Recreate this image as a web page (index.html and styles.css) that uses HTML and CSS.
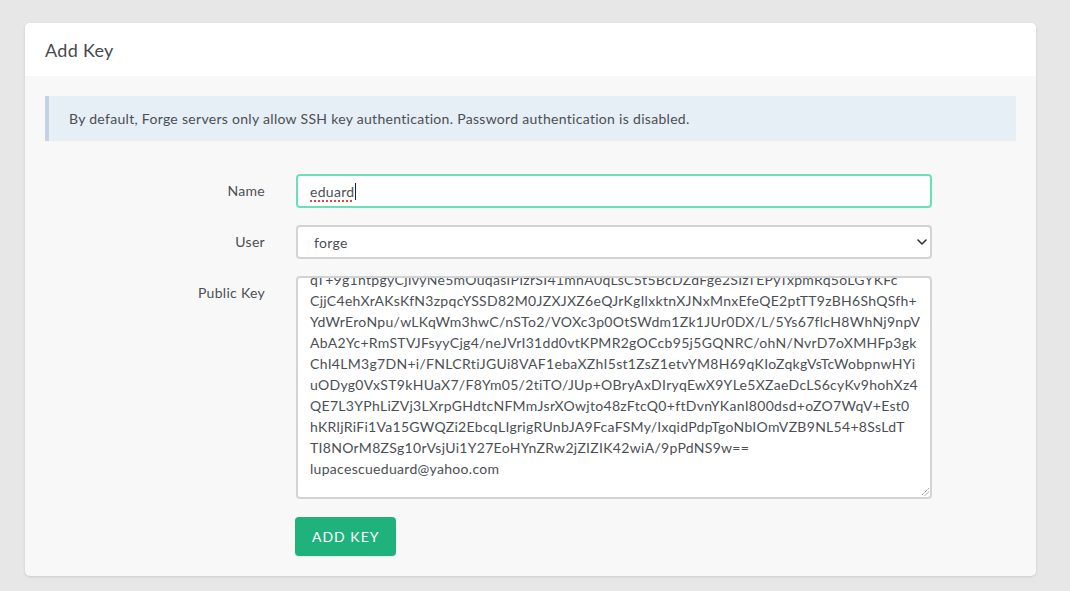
FILE: index.html
```html
<!DOCTYPE html>
<html lang="en">
<head>
<meta charset="utf-8">
<title>Add Key</title>
<link rel="stylesheet" href="styles.css">
</head>
<body>
<div class="card">
  <div class="card-header">Add Key</div>
  <div class="card-body">
    <div class="alert">By default, Forge servers only allow SSH key authentication. Password authentication is disabled.</div>
    <form class="form">
      <div class="form-row">
        <label class="form-label">Name</label>
        <div class="field field-focus"><span class="misspelled">eduard</span><span class="caret"></span></div>
      </div>
      <div class="form-row">
        <label class="form-label">User</label>
        <div class="select-wrap">
          <select class="field select"><option>forge</option><option>root</option></select>
          <svg class="chevron" width="10" height="6" viewBox="0 0 10 6"><path d="M1 1 L5 5 L9 1" fill="none" stroke="#333" stroke-width="1.6" stroke-linecap="round" stroke-linejoin="round"/></svg>
        </div>
      </div>
      <div class="form-row">
        <label class="form-label">Public Key</label>
        <div class="key-box">
          <div class="key-text">ssh-rsa AAAAB3NzaC1yc2EAAAADAQABAAACAQDmX4rL1Fq0b8Uo2vX
qT+9g1ntpgyCjIvyNe5mOuqasIPIzrSI41mnA0qLsC5t5BcDZdFge2SIzTEPyTxpmRq5oLGYKFc
CjjC4ehXrAKsKfN3zpqcYSSD82M0JZXJXZ6eQJrKgIlxktnXJNxMnxEfeQE2ptTT9zBH6ShQSfh+
YdWrEroNpu/wLKqWm3hwC/nSTo2/VOXc3p0OtSWdm1Zk1JUr0DX/L/5Ys67flcH8WhNj9npV
AbA2Yc+RmSTVJFsyyCjg4/neJVrI31dd0vtKPMR2gOCcb95j5GQNRC/ohN/NvrD7oXMHFp3gk
ChI4LM3g7DN+i/FNLCRtiJGUi8VAF1ebaXZhI5st1ZsZ1etvYM8H69qKIoZqkgVsTcWobpnwHYi
uODyg0VxST9kHUaX7/F8Ym05/2tiTO/JUp+OBryAxDIryqEwX9YLe5XZaeDcLS6cyKv9hohXz4
QE7L3YPhLiZVj3LXrpGHdtcNFMmJsrXOwjto48zFtcQ0+ftDvnYKanI800dsd+oZO7WqV+Est0
hKRljRiFi1Va15GWQZi2EbcqLIgrigRUnbJA9FcaFSMy/IxqidPdpTgoNbIOmVZB9NL54+8SsLdT
TI8NOrM8ZSg10rVsjUi1Y27EoHYnZRw2jZIZIK42wiA/9pPdNS9w==
lupacescueduard@yahoo.com</div>
          <svg class="resizer" width="9" height="9" viewBox="0 0 9 9"><path d="M8.5 1.5 L1.5 8.5 M8.5 5 L5 8.5" stroke="#555" stroke-width="1" stroke-dasharray="1 1"/></svg>
        </div>
      </div>
      <div class="form-row form-actions">
        <span></span>
        <div><button type="button" class="btn">Add Key</button></div>
      </div>
    </form>
  </div>
</div>
</body>
</html>
```
FILE: styles.css
```css
* { box-sizing: border-box; }
html, body { margin: 0; }
body {
  background: #e7e7e7;
  font-family: Lato, "Noto Sans", sans-serif;
  letter-spacing: 0.3px;
  color: #4b4f54;
  padding: 23px 34px 14px 25px;
}
.card {
  background: #f8f8f8;
  border-radius: 5px;
  box-shadow: 0 1px 3px rgba(0,0,0,0.12);
  overflow: hidden;
}
.card-header {
  background: #fff;
  height: 53px;
  padding: 0 20px;
  display: flex;
  align-items: center;
  font-size: 18px;
  color: #464a4f;
}
.card-body {
  padding: 20px 20px 20px;
}
.alert {
  background: #e6eef6;
  border-left: 4px solid #c3d3e3;
  padding: 12px 20px;
  font-size: 14px;
  line-height: 21px;
  color: #4b4f54;
  margin-bottom: 33px;
}
.form { display: flex; flex-direction: column; gap: 17px; }
.form-row {
  display: grid;
  grid-template-columns: 220px 636px;
  column-gap: 31px;
  align-items: start;
}
.form-actions { margin-top: 1px; }
.form-label {
  text-align: right;
  font-size: 14px;
  line-height: 20px;
  padding-top: 7px;
  color: #4b4f54;
}
.field {
  width: 100%;
  height: 34px;
  border: 2px solid #d3d3d3;
  border-radius: 4px;
  background: #fff;
  font-family: inherit;
  letter-spacing: inherit;
  font-size: 14px;
  color: #4b4f54;
  padding: 0 12px;
  display: flex;
  align-items: center;
}
.field-focus { border-color: #6ae0b8; }
.misspelled {
  text-decoration: underline dotted #e0483e;
  text-decoration-thickness: 1.5px;
  text-underline-offset: 4px;
}
.caret {
  display: inline-block;
  width: 1px;
  height: 17px;
  background: #222;
  margin-left: 1px;
}
.select-wrap { position: relative; }
.select {
  appearance: none;
  -webkit-appearance: none;
  padding-left: 16px;
}
.chevron {
  position: absolute;
  right: 5px;
  top: 14px;
}
.key-box {
  position: relative;
  height: 223px;
  border: 2px solid #d3d3d3;
  border-radius: 4px;
  background: #fff;
  overflow: hidden;
  display: flex;
  flex-direction: column;
  justify-content: flex-end;
  padding: 6px 12px 18px;
}
.key-text {
  white-space: pre;
  font-size: 14px;
  line-height: 21px;
  color: #4b4f54;
}
.resizer {
  position: absolute;
  right: 1px;
  bottom: 1px;
}
.btn {
  background: #1fb27c;
  color: #fff;
  border: none;
  border-radius: 4px;
  height: 39px;
  padding: 0 17px;
  font-family: inherit;
  font-size: 14px;
  letter-spacing: 1px;
  text-transform: uppercase;
  margin-left: -1px;
  box-shadow: 0 1px 2px rgba(0,0,0,0.08);
}
```
